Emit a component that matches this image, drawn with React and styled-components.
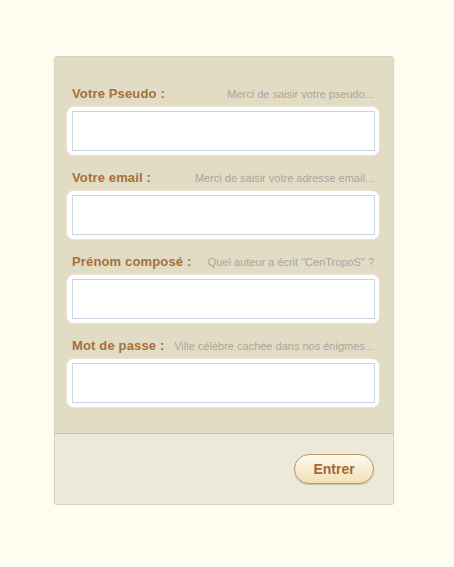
import styled, { createGlobalStyle } from 'styled-components';

const GlobalStyle = createGlobalStyle`
    html, body {
        margin: 0;
        padding: 0;
        background: #fefdf0;
    }
    body {
        font-family: "Liberation Sans", Arial, sans-serif;
    }
`;

const Page = styled.div`
    padding: 56px 0 0 54px;
`;

const Card = styled.form`
    box-sizing: border-box;
    width: 340px;
    border: 1px solid #d9d2bc;
    border-radius: 3px;
    box-shadow: 0 1px 2px rgba(0, 0, 0, 0.08);
    overflow: hidden;
`;

const Fields = styled.div`
    background: #e3dcc4;
    padding: 29px 14px 26px 12px;
    display: flex;
    flex-direction: column;
    gap: 15px;
    border-bottom: 1px solid #c9bfa3;
`;

const Field = styled.div`
    display: flex;
    flex-direction: column;
    gap: 6px;
`;

const LabelRow = styled.div`
    display: flex;
    justify-content: space-between;
    align-items: baseline;
    padding: 0 5px 0 5px;
    height: 15px;
`;

const Label = styled.label`
    font-size: 13px;
    font-weight: bold;
    letter-spacing: 0.15px;
    color: #a6703a;
`;

const Hint = styled.span`
    font-size: 11px;
    color: #a9a59e;
`;

const InputFrame = styled.div`
    background: #fff;
    border-radius: 7px;
    padding: 4px 4px 4px 5px;
    box-shadow: 0 0 2px rgba(255, 255, 255, 0.9);
`;

const Input = styled.input`
    display: block;
    box-sizing: border-box;
    width: 100%;
    height: 40px;
    border: 1px solid #cbd4e4;
    background: #fff;
    outline: none;
    font: 13px "Liberation Sans", Arial, sans-serif;
    padding: 0 6px;
`;

const Footer = styled.div`
    background: #ece8da;
    height: 70px;
    display: flex;
    justify-content: flex-end;
    align-items: center;
    padding-right: 19px;
`;

const Button = styled.button`
    width: 80px;
    height: 30px;
    border-radius: 15px;
    border: 1px solid #b99565;
    background: linear-gradient(#fffaec, #f4dfb6);
    box-shadow: 0 1px 1px rgba(120, 90, 40, 0.3);
    color: #a0683a;
    font: bold 14px "Liberation Sans", Arial, sans-serif;
    cursor: pointer;
`;

const fields = [
    { label: 'Votre Pseudo :', hint: 'Merci de saisir votre pseudo...', type: 'text' },
    { label: 'Votre email :', hint: 'Merci de saisir votre adresse email...', type: 'email' },
    { label: 'Prénom composé :', hint: 'Quel auteur a écrit "CenTropoS" ?', type: 'text' },
    { label: 'Mot de passe :', hint: 'Ville célèbre cachée dans nos énigmes...', type: 'password' },
];

const App = () => {
    return (
        <Page>
            <GlobalStyle />
            <Card onSubmit={e => e.preventDefault()}>
                <Fields>
                    {fields.map(f => (
                        <Field key={f.label}>
                            <LabelRow>
                                <Label>{f.label}</Label>
                                <Hint>{f.hint}</Hint>
                            </LabelRow>
                            <InputFrame>
                                <Input type={f.type} />
                            </InputFrame>
                        </Field>
                    ))}
                </Fields>
                <Footer>
                    <Button type="submit">Entrer</Button>
                </Footer>
            </Card>
        </Page>
    );
};

export default App;
